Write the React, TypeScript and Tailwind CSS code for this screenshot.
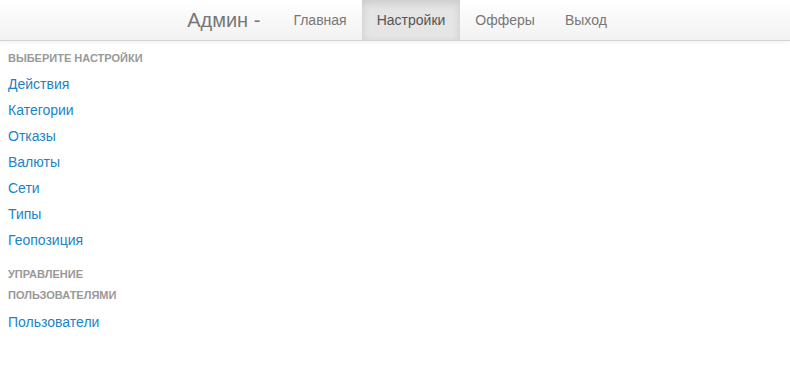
const links1 = ['Действия', 'Категории', 'Отказы', 'Валюты', 'Сети', 'Типы', 'Геопозиция'];

function NavItem({ label, active }: { label: string; active?: boolean }) {
  return (
    <a
      href="#"
      className={`block px-[15px] py-[10px] text-[14px] leading-[20px] ${
        active ? 'bg-[#e5e5e5] text-[#555] shadow-[inset_0_3px_8px_rgba(0,0,0,0.125)]' : 'text-[#777]'
      }`}
    >
      {label}
    </a>
  );
}

export default function App() {
  return (
    <div className="min-h-screen bg-white font-['Liberation_Sans',Arial,sans-serif]">
      <div className="h-[41px] bg-gradient-to-b from-white to-[#f2f2f2] border-b border-[#d4d4d4] shadow-[0_1px_4px_rgba(0,0,0,0.065)]">
        <div className="flex justify-center pr-[1px]">
          <div className="flex items-center">
            <span className="pl-[20px] pr-[18px] py-[10px] text-[20px] leading-[20px] text-[#777]">Админ -</span>
            <nav className="flex">
              <NavItem label="Главная" />
              <NavItem label="Настройки" active />
              <NavItem label="Офферы" />
              <NavItem label="Выход" />
            </nav>
          </div>
        </div>
      </div>

      <ul className="mt-[4px] w-[170px]">
        <li className="px-[8px] py-[3px] text-[11px] leading-[20px] font-bold uppercase text-[#999]">
          Выберите настройки
        </li>
        {links1.map((l) => (
          <li key={l}>
            <a href="#" className="block px-[8px] py-[3px] text-[14px] leading-[20px] text-[#1a84c8]">
              {l}
            </a>
          </li>
        ))}
        <li className="mt-[8px] w-[150px] px-[8px] py-[3px] text-[11px] leading-[21px] font-bold uppercase text-[#999]">
          Управление пользователями
        </li>
        <li>
          <a href="#" className="block px-[8px] py-[3px] text-[14px] leading-[20px] text-[#1a84c8]">
            Пользователи
          </a>
        </li>
      </ul>
    </div>
  );
}
